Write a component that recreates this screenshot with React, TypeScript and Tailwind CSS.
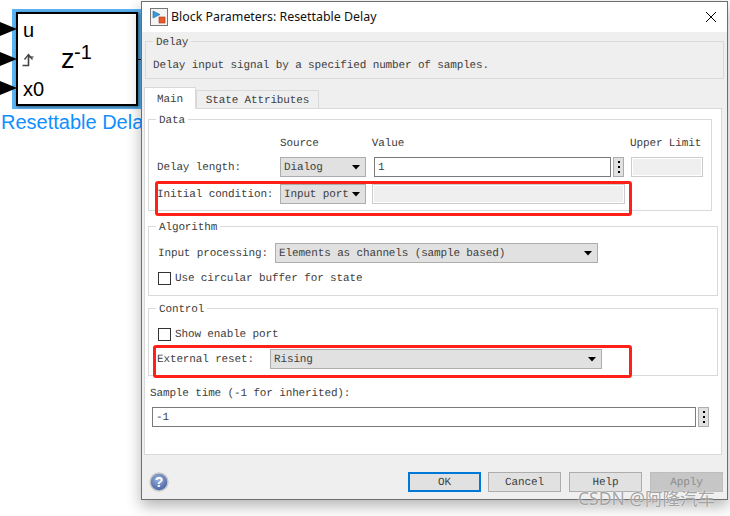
const mono = "font-['Liberation_Mono',monospace] text-[11px] tracking-[-0.14px] text-[#404040] leading-[14px] whitespace-nowrap [text-rendering:geometricPrecision]";
const rowText = `pt-[2px] ${mono}`;

function Group({ title, className, children }: { title: string; className: string; children: React.ReactNode }) {
  return (
    <div className={`relative border border-[#d9d9d9] ${className}`}>
      <span className={`absolute left-[7px] top-[-6px] bg-white px-[3px] ${mono}`}>{title}</span>
      {children}
    </div>
  );
}

function Dropdown({ value, className }: { value: string; className: string }) {
  return (
    <div className={`flex h-5 items-center justify-between border border-[#adadad] bg-[#e1e1e1] pl-[3px] pr-[5px] ${className}`}>
      <span className={`overflow-hidden ${rowText}`}>{value}</span>
      <svg width="8" height="5" viewBox="0 0 8 5" className="ml-[4px] shrink-0">
        <path d="M0 0h8L4 4.5z" fill="#000" />
      </svg>
    </div>
  );
}

function Dots() {
  return (
    <div className="ml-[2px] flex h-5 w-[11px] flex-col items-center justify-center gap-[3px] border border-[#adadad] bg-[#e1e1e1]">
      <span className="h-[2px] w-[2px] bg-black" />
      <span className="h-[2px] w-[2px] bg-black" />
      <span className="h-[2px] w-[2px] bg-black" />
    </div>
  );
}

function Disabled({ className }: { className: string }) {
  return <div className={`h-5 border border-[#cccccc] bg-[#efefef] shadow-[inset_0_0_0_1px_#ffffff] ${className}`} />;
}

function Check() {
  return <div className="h-[13px] w-[13px] border border-[#333333] bg-white" />;
}

function Btn({ label, className }: { label: string; className: string }) {
  return (
    <div className={`flex h-5 items-center justify-center ${className}`}>
      <span className="pt-[2px] font-['Liberation_Mono',monospace] text-[11px] tracking-[-0.14px] leading-[14px] text-inherit [text-rendering:geometricPrecision]">{label}</span>
    </div>
  );
}

export default function App() {
  return (
    <div className="relative h-[516px] w-[730px] overflow-hidden bg-white font-['Liberation_Sans',sans-serif]">
      {/* simulink block behind the dialog */}
      <div className="absolute left-[12px] top-[9px] h-[100px] w-[130px] bg-[#5db4f4]" />
      <div className="absolute left-[16px] top-[12px] h-[94px] w-[122px] border-2 border-black bg-white shadow-[1px_1px_3px_rgba(0,0,0,0.5)]" />
      <div className="absolute left-[138px] top-[59px] h-px w-[4px] bg-black" />
      {[29, 59, 88].map((y) => (
        <svg key={y} width="17" height="16" viewBox="0 0 17 16" className="absolute left-0" style={{ top: y - 8 }}>
          <path d="M0 1L17 8L0 15z" fill="#000" />
        </svg>
      ))}
      <span className="absolute left-[23px] top-[18px] text-[20px] leading-[24px] text-black">u</span>
      <svg width="13" height="15" viewBox="0 0 13 15" className="absolute left-[22px] top-[52px]">
        <path d="M0.5 13.5H6.5V2.5" fill="none" stroke="#444" strokeWidth="1.6" />
        <path d="M6.5 5H11.5" fill="none" stroke="#444" strokeWidth="1.2" />
        <path d="M2.5 7.5L6.5 2.5L10.5 7.5" fill="none" stroke="#444" strokeWidth="1.3" />
      </svg>
      <span className="absolute left-[23px] top-[77px] text-[20px] leading-[24px] text-black">x0</span>
      <span className="absolute left-[61px] top-[44px] text-[27px] leading-[30px] text-black">z</span>
      <span className="absolute left-[74px] top-[40px] text-[20px] leading-[24px] text-black">-1</span>
      <span className="absolute left-[1px] top-[110px] whitespace-nowrap text-[20px] leading-[24px] text-[#0f8fff]">Resettable Delay</span>

      {/* dialog */}
      <div className="absolute left-[141px] top-[1px] flex h-[499px] w-[587px] flex-col border border-[#6e6e6e] bg-[#efefef] shadow-[0_6px_14px_rgba(0,0,0,0.3)]">
        <div className="flex h-[30px] shrink-0 items-center bg-white pl-[8px] pr-[10px]">
          <svg width="19" height="18" viewBox="0 0 19 18" className="shrink-0">
            <rect x="0.5" y="0.5" width="17" height="17" fill="#f4f4f4" stroke="#777" />
            <path d="M3 3L10 6.5L3 10z" fill="#3a9bd8" stroke="#1c6a9e" strokeWidth="0.6" />
            <rect x="9" y="9" width="6" height="6" fill="#e8582a" stroke="#a33a16" strokeWidth="0.6" />
          </svg>
          <span className="ml-[2px] whitespace-nowrap font-['Noto_Sans',sans-serif] text-[12.4px] text-[#111111]">Block Parameters: Resettable Delay</span>
          <svg width="12" height="12" viewBox="0 0 12 12" className="ml-auto">
            <path d="M1 1L11 11M11 1L1 11" stroke="#000" strokeWidth="1" />
          </svg>
        </div>

        <Group title="Delay" className="ml-[3px] mt-[9px] h-[38px] w-[579px] shrink-0 bg-[#efefef] [&>span:first-child]:bg-[#efefef]">
          <p className={`ml-[7px] mt-[17px] ${mono}`}>Delay input signal by a specified number of samples.</p>
        </Group>

        <div className="relative z-10 ml-[2px] mt-[8px] flex h-[22px] shrink-0 items-end">
          <div className={`flex h-[22px] w-[52px] items-center justify-center border border-b-0 border-[#d9d9d9] bg-white ${rowText}`}>Main</div>
          <div className={`flex h-[19px] w-[123px] items-center justify-center border border-[#d9d9d9] bg-[#efefef] ${rowText}`}>State Attributes</div>
        </div>

        <div className="ml-[2px] mt-[-1px] h-[347px] w-[578px] shrink-0 border border-[#d9d9d9] bg-white">
          <Group title="Data" className="ml-[3px] mt-[10px] h-[92px] w-[564px]">
            <div className={`flex pt-[17px] ${mono}`}>
              <span className="ml-[131px]">Source</span>
              <span className="ml-[53px]">Value</span>
              <span className="ml-[226px]">Upper Limit</span>
            </div>
            <div className="mt-[6px] flex items-center">
              <span className={`ml-[8px] w-[123px] ${rowText}`}>Delay length:</span>
              <Dropdown value="Dialog" className="w-[86px]" />
              <div className={`ml-[8px] flex h-5 w-[237px] items-center border border-[#7a7a7a] bg-white pl-[3px] ${rowText}`}>1</div>
              <Dots />
              <Disabled className="ml-[7px] w-[72px]" />
            </div>
            <div className="mt-[7px] flex items-center">
              <span className={`ml-[8px] w-[123px] ${rowText}`}>Initial condition:</span>
              <Dropdown value="Input port" className="w-[86px]" />
              <Disabled className="ml-[6px] w-[253px]" />
            </div>
          </Group>

          <Group title="Algorithm" className="ml-[3px] mt-[15px] h-[70px] w-[570px]">
            <div className="flex items-center pt-[16px]">
              <span className={`ml-[9px] w-[117px] ${rowText}`}>Input processing:</span>
              <Dropdown value="Elements as channels (sample based)" className="w-[323px]" />
            </div>
            <div className="mt-[7px] flex items-center">
              <div className="ml-[9px]"><Check /></div>
              <span className={`ml-[4px] ${rowText}`}>Use circular buffer for state</span>
            </div>
          </Group>

          <Group title="Control" className="ml-[3px] mt-[12px] h-[68px] w-[570px]">
            <div className="flex items-center pt-[17px]">
              <div className="ml-[9px]"><Check /></div>
              <span className={`ml-[4px] ${rowText}`}>Show enable port</span>
            </div>
            <div className="mt-[7px] flex items-center">
              <span className={`ml-[8px] w-[113px] ${rowText}`}>External reset:</span>
              <Dropdown value="Rising" className="w-[332px]" />
            </div>
          </Group>

          <p className={`ml-[5px] mt-[11px] ${mono}`}>Sample time (-1 for inherited):</p>
          <div className="ml-[7px] mt-[6px] flex items-center">
            <div className={`flex h-5 w-[544px] items-center border border-[#7a7a7a] bg-white pl-[3px] ${rowText}`}>-1</div>
            <Dots />
          </div>
        </div>

        <div className="flex flex-1 items-start pl-[7px] pt-[16px]">
          <svg width="20" height="20" viewBox="0 0 20 20" className="mt-[1px] shrink-0">
            <defs>
              <radialGradient id="help" cx="45%" cy="35%" r="70%">
                <stop offset="0%" stopColor="#9db4e0" />
                <stop offset="100%" stopColor="#3c5a9e" />
              </radialGradient>
            </defs>
            <circle cx="10" cy="10" r="9" fill="url(#help)" stroke="#c9c9c9" strokeWidth="1.5" />
            <text x="10" y="15" textAnchor="middle" fontSize="14" fontWeight="700" fontFamily="Liberation Sans, sans-serif" fill="#fff">?</text>
          </svg>
          <div className="ml-[239px] mt-[1px] flex">
            <Btn label="OK" className="w-[73px] border-2 border-[#0078d7] bg-[#e1e1e1] text-[#404040]" />
            <Btn label="Cancel" className="ml-[7px] w-[73px] border border-[#adadad] bg-[#e1e1e1] text-[#404040]" />
            <Btn label="Help" className="ml-[8px] w-[73px] border border-[#adadad] bg-[#e1e1e1] text-[#404040]" />
            <Btn label="Apply" className="ml-[8px] w-[73px] border border-[#bdbdbd] bg-[#c6c6c6] text-[#8c8c8c]" />
          </div>
        </div>
      </div>

      {/* red highlight boxes */}
      <div className="absolute left-[155px] top-[181px] h-[35px] w-[477px] rounded-[3px] border-[3px] border-[#ff2018]" />
      <div className="absolute left-[153px] top-[345px] h-[33px] w-[479px] rounded-[3px] border-[3px] border-[#ff2018]" />

      {/* watermark */}
      <span className="absolute left-[578px] top-[488px] whitespace-nowrap font-['Noto_Sans','Noto_Sans_CJK_SC',sans-serif] text-[17.5px] leading-[20px] text-[#8f8f8f]/80 [text-shadow:0_0_2px_#ffffff]">CSDN @阿隆汽车</span>
    </div>
  );
}
